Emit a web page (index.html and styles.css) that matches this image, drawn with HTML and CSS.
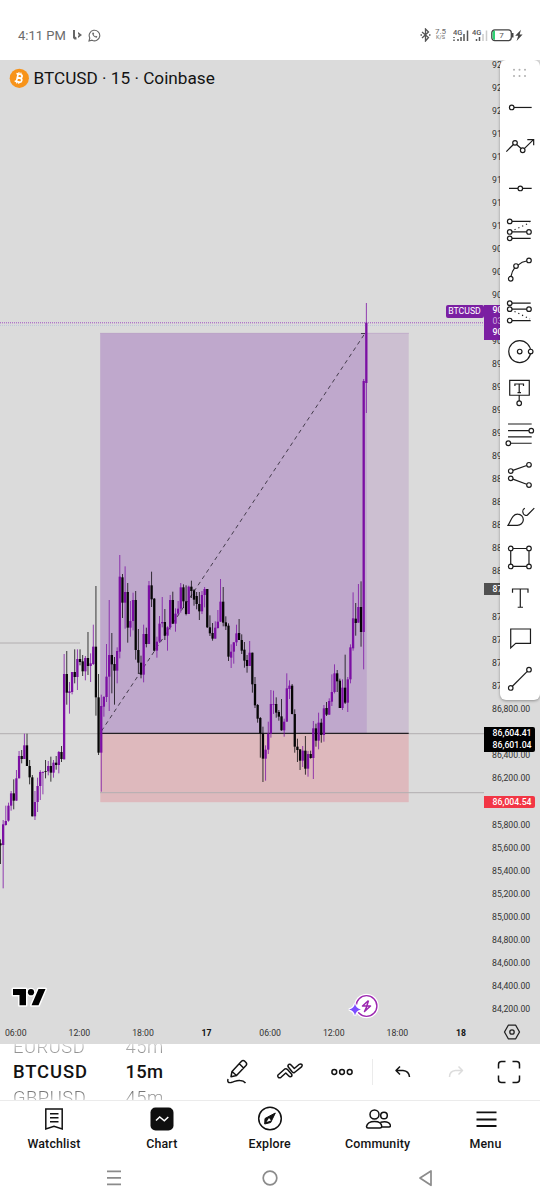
FILE: index.html
```html
<!DOCTYPE html>
<html lang="en">
  <head>
    <meta charset="UTF-8" />
    <meta name="viewport" content="width=device-width, initial-scale=1.0" />
    <title>BTCUSD</title>
    <link rel="stylesheet" href="styles.css">
  </head>
  <body>
    <div class="phone">
      <header class="status">
        <span class="clock">4:11 PM</span>
        <svg class="status-app" width="11" height="12" viewBox="0 0 11 12">
          <path d="M1 1h2v6.500l1.500 1v2H2.500L1 9z M6 3l4 3-4 3V7l1-1-1-1z" fill="#666" />
        </svg>
        <svg width="13" height="13" viewBox="0 0 13 13" fill="none" stroke="#666">
          <path d="M1 12l.8-3A5.300 5.300 0 1 1 4 11.200z" stroke-width="1.100" />
          <path d="M4.300 3.800c-.6 2 2.200 4.900 4.500 4.900l.6-1.200-1.500-.8-.8.7-1.500-1.600.6-.7-.6-1.500z" fill="#666" stroke="none" />
        </svg>
        <div class="status-right">
          <svg class="bluetooth" width="11" height="14" viewBox="0 0 11 14" fill="none" stroke="#555" stroke-width="1.300">
            <path d="M2 4l6.500 5.500L5.500 13V1l3 3L2 10" />
            <path d="M.5 7h1.500M9 7h1.500" />
          </svg>
          <span class="speed"><b>7.5</b><i>K/S</i></span>
          <svg class="signal" width="17" height="14" viewBox="0 0 17 14">
            <text x="0" y="6.800">4G</text>
            <path d="M1 9v1M1 11.500V13M5 11v2M8 9v4M11 6v7M14.500 2.500V13" stroke="#555" stroke-width="1.500" />
          </svg>
          <svg class="signal" width="17" height="14" viewBox="0 0 17 14">
            <text x="0" y="6.800">4G</text>
            <path d="M4.500 11v2M7.500 9v4" stroke="#555" stroke-width="1.500" />
            <path d="M11 6v7M14.500 2.500V13" stroke="#ccc" stroke-width="1.500" />
          </svg>
          <svg class="battery" width="33" height="13" viewBox="0 0 33 13">
            <rect x=".8" y=".8" width="19.500" height="10.800" rx="3" fill="#fff" stroke="#444" stroke-width="1.300" />
            <path d="M1.600 3.500Q1.600 1.600 4 1.500v9.400Q1.600 10.800 1.600 9z" fill="#2fd274" />
            <path d="M21.700 4v4.500" stroke="#444" stroke-width="1.600" />
            <text x="8.300" y="9">7</text>
            <path d="M30 .8l-5.800 6h3l-1.600 5.200 6-6.500h-3z" fill="#444" />
          </svg>
        </div>
      </header>

      <main class="chart">
        <svg class="plot" id="plot" width="484" height="960" viewBox="0 60 484 960">
          <rect x="100.300" y="333" width="308.400" height="400" fill="#ccbfd1" />
          <rect x="100.300" y="333" width="266.500" height="400" fill="#bfa8cc" />
          <rect x="100.300" y="733" width="308.400" height="69.200" fill="#deb9bd" />
          <path d="M100 333.300H409" stroke="#b9a3c4" stroke-width=".6" />
          <path d="M0 643H80M0 733.700H484M100 792.700H484" stroke="#b2aeb0" stroke-width="1" />
          <path d="M100.300 733.300H408.700" stroke="#242024" stroke-width="1.200" />
          <path d="M101.500 731L365 333.300M361 333.500h4" stroke="#453c4c" stroke-width="1" stroke-dasharray="4 3.600" fill="none" />
          <path d="M0 322.800H484" stroke="#a04fc0" stroke-width="1" stroke-dasharray="1 1" />
          <path d="M0 325.500H484" stroke="#b9c2dd" stroke-width=".8" stroke-dasharray="1 1" />
          <g id="candles"></g>
        </svg>
        <div class="axis" id="axis"></div>

        <div class="symbol">
          <svg width="20" height="20" viewBox="0 0 20 20">
            <circle cx="10.300" cy="10.300" r="9.600" fill="#f7931a" />
            <g transform="rotate(13 10 10)" fill="none" stroke="#fff">
              <path d="M6.500 6.200h4.300a1.800 1.800 0 0 1 0 3.700H8.300M8 9.900h3.200a2 2 0 0 1 0 4H6.500M8.300 6v7.900" stroke-width="1.700" />
              <path d="M8.800 4.300V6M10.900 4.300V6M8.800 14v1.700M10.900 14v1.700" stroke-width="1.200" />
            </g>
          </svg>
          <span>BTCUSD · 15 · Coinbase</span>
        </div>

        <span class="ticker">BTCUSD</span>
        <div class="tag last"><span>90,140</span><span class="countdown">03:21</span><span>90,060</span></div>
        <div class="tag grey"><span>87,850</span></div>
        <div class="tag black"><span>86,604.41</span><span>86,601.04</span></div>
        <div class="tag red"><span>86,004.54</span></div>

        <svg class="brand" width="38" height="22" viewBox="0 0 38 22">
          <g stroke="#fff" stroke-width="3" stroke-linejoin="round">
            <path d="M3 3h13v16.300H9.500V9H3zM28.500 19.300H21.500L28.500 3h7z" />
            <circle cx="21" cy="6.200" r="3" />
          </g>
          <path d="M3 3h13v16.300H9.500V9H3zM28.500 19.300H21.500L28.500 3h7z" />
          <circle cx="21" cy="6.200" r="3.100" />
        </svg>
        <svg class="replay" width="32" height="26" viewBox="0 0 32 26">
          <circle cx="18.500" cy="13" r="12.300" fill="#fff" />
          <circle cx="18.500" cy="13" r="10.400" fill="#fff" stroke="#9c27b0" stroke-width="1.400" />
          <path d="M20.500 7.500l-6 5.500h8l-6 5.500 2.500-5.500M20.500 7.500L18.800 13" fill="none" stroke="#9c27b0" stroke-width="1.500" stroke-linejoin="round" />
          <path d="M7 10.800Q8 15.500 13 16.600 8 17.700 7 22.500 6 17.700 1 16.600 6 15.500 7 10.800z" fill="#7c4dff" stroke="#fff" stroke-width="2.600" paint-order="stroke" />
        </svg>

        <div class="times">
          <span>06:00</span><span>12:00</span><span>18:00</span><span class="day">17</span>
          <span>06:00</span><span>12:00</span><span>18:00</span><span class="day">18</span>
        </div>
        <svg class="settings" width="18" height="16" viewBox="0 0 18 16" fill="none" stroke="#222" stroke-width="1.300">
          <path d="M5.300 1.200h7.400L16.500 8l-3.800 6.800H5.300L1.500 8z" stroke-linejoin="round" />
          <circle cx="9" cy="8" r="2.200" />
        </svg>

        <aside class="tools">
          <svg class="grip" viewBox="0 0 40 26.500">
            <path d="M14 9.800h.01M19.500 9.800h.01M25 9.800h.01M14 16h.01M19.500 16h.01M25 16h.01" />
          </svg>
          <svg viewBox="0 0 40 41"><path d="M14 20.500H31.700" /><circle cx="11.700" cy="20.500" r="2.300" /></svg>
          <svg viewBox="0 0 40 41">
            <path d="M6.300 24.600L13.400 17.500M16.600 17.600L21.100 21.600M24.300 21.700L33.500 12.700M27.300 12.600H33.700V18.200" />
            <circle cx="15" cy="15.900" r="2.300" /><circle cx="22.700" cy="23.300" r="2.300" />
          </svg>
          <svg viewBox="0 0 40 41"><path d="M9 20.500h9M22.600 20.500h9.100" /><circle cx="20.300" cy="20.500" r="2.300" /></svg>
          <svg viewBox="0 0 40 41">
            <path d="M12 12.400H30.700M12 23H26.700M12 29.400H30.700" />
            <path class="dots" d="M14.500 20.800L30 13.700" />
            <circle cx="9.700" cy="12.400" r="2.300" /><circle cx="9.700" cy="23" r="2.300" /><circle cx="29" cy="23" r="2.300" /><circle cx="9.700" cy="29.400" r="2.300" />
          </svg>
          <svg viewBox="0 0 40 41">
            <path d="M11 26.500Q12 21 14.700 18M18 15.100Q22 11.500 26.700 11" />
            <circle cx="10.700" cy="28.800" r="2.300" /><circle cx="16" cy="16.100" r="2.300" /><circle cx="29" cy="10.500" r="2.300" />
          </svg>
          <svg viewBox="0 0 40 41">
            <path d="M12 12.200H30.700M12 18.200H26.700M12 29.600H30.700" />
            <path class="dots" d="M14.500 20.500L30 28" />
            <circle cx="9.700" cy="12.200" r="2.300" /><circle cx="9.700" cy="18.200" r="2.300" /><circle cx="29" cy="18.200" r="2.300" /><circle cx="9.700" cy="29.600" r="2.300" />
          </svg>
          <svg viewBox="0 0 40 41">
            <circle cx="19.700" cy="19.600" r="11" fill="none" /><circle cx="19.700" cy="19.600" r="2.300" /><circle class="solid" cx="30.700" cy="19.600" r="2.300" />
          </svg>
          <svg viewBox="0 0 40 41">
            <path d="M9.700 7.300H29.300V22.300H9.700zM19.200 22.300V28M14.900 13V11H23.500V13M19.200 11V19.700M17.500 19.700H21" />
            <circle cx="19.200" cy="30.300" r="2.300" />
          </svg>
          <svg viewBox="0 0 40 41">
            <path d="M8 10H31.700M8 16.700H29M8 23H31.700M10.700 29.300H31.700" />
            <circle cx="31.300" cy="16.700" r="2.300" /><circle cx="8.300" cy="29.300" r="2.300" />
          </svg>
          <svg viewBox="0 0 40 41">
            <path d="M12.900 15.400L26.700 10.500M12.900 24.200L26.700 29.300" />
            <circle cx="10.700" cy="16.100" r="2.300" /><circle cx="29" cy="9.800" r="2.300" /><circle cx="10.700" cy="23.400" r="2.300" /><circle cx="29" cy="30.100" r="2.300" />
          </svg>
          <svg viewBox="0 0 40 41">
            <path d="M8 29.400C11 25 12 18 17.800 18.200C21 18.200 23.500 21 23.300 24C23.200 27 20.500 29.400 17.300 29.400zM24.800 12.200C22 14 22.300 15.500 23.500 18C24.500 19.500 26.500 20 27.500 19L34.300 12.200" />
          </svg>
          <svg viewBox="0 0 40 41">
            <path d="M10.700 11.500H29V29.500H10.700z" />
            <circle class="solid" cx="10.700" cy="11.500" r="2.300" /><circle class="solid" cx="29" cy="11.500" r="2.300" /><circle class="solid" cx="10.700" cy="29.500" r="2.300" /><circle class="solid" cx="29" cy="29.500" r="2.300" />
          </svg>
          <svg viewBox="0 0 40 41"><path d="M12.500 14.700V11H28V14.700M20.300 11V29.300M17.700 29.300H23" /></svg>
          <svg viewBox="0 0 40 41"><path d="M10.700 11H30.500V25.400H15.700L10.700 30z" /></svg>
          <svg viewBox="0 0 40 41">
            <path d="M12.400 27.300L27.300 12.400" /><circle cx="29" cy="10.700" r="2.300" /><circle cx="10.700" cy="29" r="2.300" />
          </svg>
        </aside>
      </main>

      <section class="controls">
        <div class="wheel symbols"><span>EURUSD</span><strong>BTCUSD</strong><span>GBPUSD</span></div>
        <div class="wheel intervals"><span>45m</span><strong>15m</strong><span>45m</span></div>
        <div class="buttons">
          <svg width="24" height="26" viewBox="0 0 24 26">
            <path d="M6 12.500L15.500 2.300Q17 .8 18.700 2.200L20 3.500Q21.300 5 20 6.500L10.500 16.500 5 17.700zM13.300 4.700L17.600 9M6 12.500L10.500 16.500" />
            <path d="M2 20Q.8 24.300 5 23.500C9 22.500 11 21 14 21.500Q17.500 21.500 19.500 24" />
          </svg>
          <svg width="28" height="20" viewBox="0 0 28 20">
            <path d="M2 13L8.500 7.200Q10 6.200 11.500 7.500L15.500 12Q16.600 13.700 15 14.600Q13.800 15 12.800 14L9.800 11 5 15.300Q3.500 16.300 2.300 15.300 1.200 14 2 13z" />
            <path d="M12.500 5.300Q11.300 3.500 12.700 2.500 14.200 1.800 15.300 3.200L18.300 6.500 23.300 2.300Q24.800 1.400 26 2.600 26.600 3.700 25.500 4.900L18.500 10.500Q17.300 11 16.300 10z" />
          </svg>
          <svg width="24" height="10" viewBox="0 0 24 10">
            <circle cx="4.300" cy="5" r="2.400" /><circle cx="12" cy="5" r="2.400" /><circle cx="19.700" cy="5" r="2.400" />
          </svg>
          <i class="divider"></i>
          <svg width="18" height="14" viewBox="0 0 18 14"><path d="M6 1.500L2 5.500l4 4M2.500 5.500H9q6 .5 6.500 6.500" /></svg>
          <svg class="off" width="18" height="14" viewBox="0 0 18 14"><path d="M11.500 1.500l4 4-4 4M15 5.500H8.500Q2.500 6 2.500 12" /></svg>
          <svg width="24" height="24" viewBox="0 0 24 24"><path d="M1.500 8.500V4.500Q1.500 1.500 4.500 1.500H8.500M15.500 1.500H19.500Q22.500 1.500 22.500 4.500V8.500M22.500 15.500V19.500Q22.500 22.500 19.500 22.500H15.500M8.500 22.500H4.500Q1.500 22.500 1.500 19.500V15.500" /></svg>
        </div>
      </section>

      <nav class="tabs">
        <a>
          <svg viewBox="0 0 26 26"><path d="M4.800 3H21.200V23L13 20.300 4.800 23zM9 7.700H17.500M9 11.700H17.500M9 15.700H17.500" /></svg>
          Watchlist
        </a>
        <a>
          <svg viewBox="0 0 26 26"><rect x="1.500" y="1.500" width="23" height="23" rx="5" fill="#0f0f0f" stroke="none" /><path d="M7 14.500l3.700-3.500 4.600 3.800L19.300 11" stroke="#fff" /></svg>
          Chart
        </a>
        <a>
          <svg viewBox="0 0 26 26"><circle cx="13" cy="12.500" r="11.300" /><path d="M18.300 7L8 12.500l-.3 5.500 6-1.500z" fill="#111" stroke-width="1" /><path d="M9.500 16l2.500-4 2 2.500z" fill="#fff" stroke="none" /></svg>
          Explore
        </a>
        <a>
          <svg viewBox="0 0 26 26"><circle cx="9.500" cy="8.500" r="4.500" /><circle cx="19" cy="9.500" r="3.300" /><path d="M1.500 20.500Q2.500 15.500 9.500 15.500T16.800 20.500Q16.500 22 15 22H3Q1.500 22 1.500 20.500zM15.500 16.300Q24 14.500 25.500 19.500 25.500 21 24 21H17" /></svg>
          Community
        </a>
        <a>
          <svg viewBox="0 0 26 26"><path d="M3.500 6.300H23.500M3.500 13.500H23.500M3.500 20H23.500" stroke-width="1.800" /></svg>
          Menu
        </a>
      </nav>

      <footer class="system">
        <svg viewBox="0 0 16 18"><path d="M1 2.300H15M1 8.800H15M1 15.300H15" /></svg>
        <svg viewBox="0 0 16 18"><circle cx="8" cy="9" r="6.800" /></svg>
        <svg viewBox="0 0 16 18"><path d="M13 2V16.300L2 9z" stroke-linejoin="round" /></svg>
      </footer>
    </div>

    <script>
      const NS = "http://www.w3.org/2000/svg";
      const STEP = 2.651;

      // bars: colour, high, body top, body bottom, low
      // values are in thirds of a pixel below the base of each run
      const runs = [
        {
          base: 560,
          bars: `K 838 850 856 912,P 780 793 855 985,P 737 783 795 797,P 728 737 782 785,P 693 700 737 752,K 658 700 722 748,
            P 630 655 722 722,P 573 588 655 655,K 570 588 597 610,P 521 556 597 597,K 521 556 618 618,K 600 618 652 673,
            K 645 652 769 769,P 693 726 769 780,P 653 678 726 756,P 631 636 678 720,P 634 636 638 703,K 600 633 635 655,
            P 603 618 634 646,K 590 618 638 665,P 600 608 638 653,K 588 608 615 629,P 573 576 615 640,K 558 576 597 606,
            P 282 342 598 598,K 273 342 398 434,P 366 394 399 461,P 336 336 396 403,K 268 336 351 370,P 268 297 351 390,
            K 268 297 306 316,K 285 304 334 348,P 288 294 334 361,K 216 294 318 345,P 280 310 318 366,P 194 260 312 315,
            K 78 260 412 467,K 342 412 578 585,P 404 438 578 695,P 408 411 440 470,P 252 350 411 426,P 120 285 350 453,
            K 219 285 313 400,K 291 312 332 434,P 262 273 332 370`,
        },
        {
          base: 540,
          bars: `P 45 110 335 355,K 102 112 188 234,P 79 156 188 266,K 129 156 263 308,P 183 243 263 290,P 158 180 243 271,
            K 153 180 330 359,K 267 330 368 402,K 347 368 404 415,P 254 282 404 427,K 263 282 312 322,P 123 136 312 312,
            K 95 136 178 201,K 174 176 332 334,P 290 305 332 353,P 228 251 305 309,P 171 246 250 262,K 207 246 287 300,
            P 259 262 287 332,P 165 180 262 269,K 155 180 251 252,P 205 221 251 275,P 183 206 221 227,P 129 142 206 218,
            K 133 142 184 204,K 136 184 222 226,P 137 140 222 222,K 122 140 153 174,K 147 151 179 197,K 156 168 192 208,
            K 156 192 214 240,P 153 165 214 222,P 141 147 165 202,K 147 147 262 264,K 226 262 280 288,K 249 279 296 302,
            P 244 263 296 296,P 210 245 264 266,P 117 185 245 246,K 141 185 248 259,K 229 247 259 270,K 250 257 350 363,
            P 313 335 353 384,P 306 307 335 371,P 254 280 307 318,K 237 279 300 300,K 283 300 332 342,K 306 329 362 383,
            K 345 360 378 398,P 303 338 378 378,K 338 338 433 458,K 411 432 496 504,K 492 495 536 548,K 531 534 580 653`,
        },
        {
          base: 620,
          bars: `K 320 341 416 486,P 376 389 416 482,P 305 341 389 402,P 210 252 341 353,P 212 252 253 282,K 232 252 278 293,
            K 270 276 290 302,K 237 289 331 332,P 296 305 331 350,P 160 205 305 305,P 181 197 207 237,K 192 197 282 283,
            K 268 282 380 398,K 356 380 390 426,K 388 388 422 450,P 378 392 422 441,K 348 392 446 464,P 393 402 446 470,
            K 392 402 414 416,P 303 325 414 477,K 311 325 362 380,P 278 308 362 388,K 296 308 345 368,P 255 265 345 365,
            K 246 264 284 288,P 235 243 284 285,P 163 216 245 258,P 133 160 216 220,K 150 160 184 216,K 176 182 264 264,
            P 178 203 264 270,K 104 203 248 252,P 171 178 248 276,P 73 82 178 190`,
        },
        {
          base: 570,
          bars: `P 67 145 235 242,K 99 146 159 197,P 42 111 158 158,K 34 111 186 230,P -573 -567 186 298,P -801 -742 -561 -471`,
        },
      ];

      const candles = document.getElementById("candles");

      function addBar(x, width, y1, y2, color, opacity) {
        const rect = document.createElementNS(NS, "rect");
        rect.setAttribute("x", x - width / 2);
        rect.setAttribute("y", y1);
        rect.setAttribute("width", width);
        rect.setAttribute("height", Math.max(y2 - y1, 0.8));
        rect.setAttribute("fill", color);
        rect.setAttribute("opacity", opacity);
        candles.appendChild(rect);
      }

      let index = 0;
      runs.forEach((run) => {
        run.bars.split(",").forEach((bar) => {
          const [kind, ...values] = bar.trim().split(" ");
          const [high, top, bottom, low] = values.map((v) => run.base + v / 3);
          const color = kind === "P" ? "#7b0fa3" : "#060606";
          const x = 0.5 + STEP * index;
          addBar(x, 0.9, high, low, color, 0.85);
          addBar(x, 2.3, top, bottom, color, 1);
          index++;
        });
      });

      // these steps sit right under a price tag
      const covered = [90200, 87800, 86600, 86000];
      const axis = document.getElementById("axis");
      for (let price = 92400; price >= 84200; price -= 200) {
        const label = document.createElement("span");
        if (!covered.includes(price)) {
          label.textContent = price.toLocaleString("en-US", { minimumFractionDigits: 2 });
        }
        axis.appendChild(label);
      }
    </script>
  </body>
</html>
```
FILE: styles.css
```css
body,
html {
  margin: 0;
  padding: 0;
  height: 100%;
  overflow: hidden;
  font-family: Roboto, sans-serif;
  background-color: #fff;
  color: #131313;
}
.phone {
  width: 540px;
  height: 1200px;
  display: flex;
  flex-direction: column;
}

/* status bar */
.status {
  height: 60px;
  box-sizing: border-box;
  padding: 10px 16.5px 0 18px;
  display: flex;
  align-items: center;
  color: #6b6b6b;
}
.clock {
  font-size: 13px;
  width: 54px;
}
.status-app {
  margin-right: 5px;
}
.status-right {
  margin-left: auto;
  display: flex;
  align-items: center;
}
.speed {
  display: flex;
  flex-direction: column;
  align-items: center;
  width: 12px;
  margin: -2px 6px 0 4px;
}
.speed b {
  font-size: 8px;
  line-height: 7px;
  font-weight: 400;
}
.speed i {
  font-size: 5.5px;
  line-height: 5px;
  font-style: normal;
}
.signal {
  margin-right: 2px;
}
.signal text {
  font-size: 7.5px;
  font-weight: 500;
  fill: #555;
}
.battery text {
  font-size: 8px;
  fill: #555;
}

/* chart */
.chart {
  position: relative;
  height: 983.5px;
  flex: none;
  background-color: #dbdbdb;
  overflow: hidden;
}
.plot {
  display: block;
}
.axis {
  position: absolute;
  top: -6px;
  left: 492px;
  display: flex;
  flex-direction: column;
  font-size: 8.7px;
  color: #333;
}
.axis span {
  height: 23.02px;
  line-height: 23.02px;
}
.symbol {
  position: absolute;
  top: 8px;
  left: 9px;
  display: flex;
  align-items: center;
  gap: 4.5px;
  font-size: 17.2px;
  line-height: 20px;
  white-space: nowrap;
}
.ticker {
  position: absolute;
  top: 245px;
  left: 445.5px;
  width: 38px;
  height: 13px;
  line-height: 13px;
  border-radius: 2px;
  background-color: #7b1fa2;
  color: #fff;
  font-size: 8.7px;
  text-align: center;
}
.tag {
  position: absolute;
  left: 484.3px;
  width: 50.5px;
  box-sizing: border-box;
  padding-left: 8.3px;
  border-radius: 0 2px 2px 0;
  display: flex;
  flex-direction: column;
  font-size: 8.7px;
  font-weight: 500;
  line-height: 12px;
  color: #fff;
}
.last {
  top: 245px;
  height: 34.5px;
  line-height: 11px;
  background-color: #7b1fa2;
}
.countdown {
  font-weight: 400;
  color: #cfa9df;
}
.grey {
  top: 522.5px;
  height: 12.5px;
  background-color: #505050;
}
.black {
  top: 666.5px;
  height: 25px;
  background-color: #000;
}
.red {
  top: 735.5px;
  height: 12.5px;
  background-color: #f23645;
}
.brand {
  position: absolute;
  left: 10px;
  top: 926px;
}
.replay {
  position: absolute;
  left: 348px;
  top: 933px;
}
.times {
  position: absolute;
  left: -16px;
  top: 965px;
  display: flex;
  font-size: 8.7px;
  line-height: 16px;
  color: #333;
}
.times span {
  width: 63.6px;
  text-align: center;
}
.times .day {
  font-weight: 700;
  color: #111;
}
.settings {
  position: absolute;
  left: 503px;
  top: 964px;
}
.tools {
  position: absolute;
  top: 0;
  right: 0;
  width: 40px;
  height: 640px;
  display: flex;
  flex-direction: column;
  background-color: #fff;
  border-radius: 6px;
  box-shadow: 0 1px 3px rgba(0, 0, 0, 0.35);
}
.tools svg {
  width: 40px;
  height: 40.93px;
  flex: none;
  fill: none;
  stroke: #1c1c1c;
  stroke-width: 1.2;
}
.tools .solid {
  fill: #fff;
}
.tools .grip {
  height: 26.5px;
  stroke: #b0b0b0;
  stroke-width: 2;
  stroke-linecap: round;
}
.tools .dots {
  stroke-dasharray: 1.2 3;
}

/* symbol and interval pickers */
.controls {
  height: 57.5px;
  flex: none;
  box-sizing: border-box;
  display: flex;
  border-bottom: 1px solid #ebebeb;
  overflow: hidden;
}
.wheel {
  display: flex;
  flex-direction: column;
  justify-content: center;
  flex: none;
  font-size: 18.4px;
  line-height: 25.5px;
  letter-spacing: 0.5px;
}
.wheel strong {
  font-weight: 500;
  letter-spacing: 0.9px;
}
.wheel span {
  font-weight: 300;
  color: transparent;
  background: linear-gradient(#777 30%, #ddd 75%);
  background-clip: text;
}
.wheel span:first-child {
  background: linear-gradient(#ddd 30%, #888 80%);
  background-clip: text;
}
.symbols {
  width: 112.5px;
  padding-left: 13px;
}
.intervals {
  width: 87px;
}
.intervals strong {
  letter-spacing: 0.3px;
}
.buttons {
  flex: 1;
  display: grid;
  grid-template-columns: 50px 55px 48px 14px 47px 59px 46px;
  align-items: center;
  justify-items: center;
}
.buttons svg {
  fill: none;
  stroke: #131313;
  stroke-width: 1.5;
  stroke-linejoin: round;
}
.buttons .off {
  stroke: #dcdcdc;
}
.divider {
  width: 1px;
  height: 26px;
  background-color: #ebebeb;
}

/* bottom tabs */
.tabs {
  height: 56px;
  display: flex;
}
.tabs a {
  width: 107.9px;
  padding-top: 5px;
  display: flex;
  flex-direction: column;
  align-items: center;
  font-size: 12.4px;
  font-weight: 500;
  line-height: 16px;
  letter-spacing: 0.15px;
}
.tabs svg {
  width: 26px;
  height: 26px;
  margin-bottom: 3.5px;
  fill: none;
  stroke: #111;
  stroke-width: 1.5;
}

/* system navigation */
.system {
  height: 42px;
  display: flex;
  justify-content: center;
  align-items: center;
  gap: 140px;
}
.system svg {
  width: 16px;
  height: 18px;
  fill: none;
  stroke: #8b8b8b;
  stroke-width: 1.7;
}
```
